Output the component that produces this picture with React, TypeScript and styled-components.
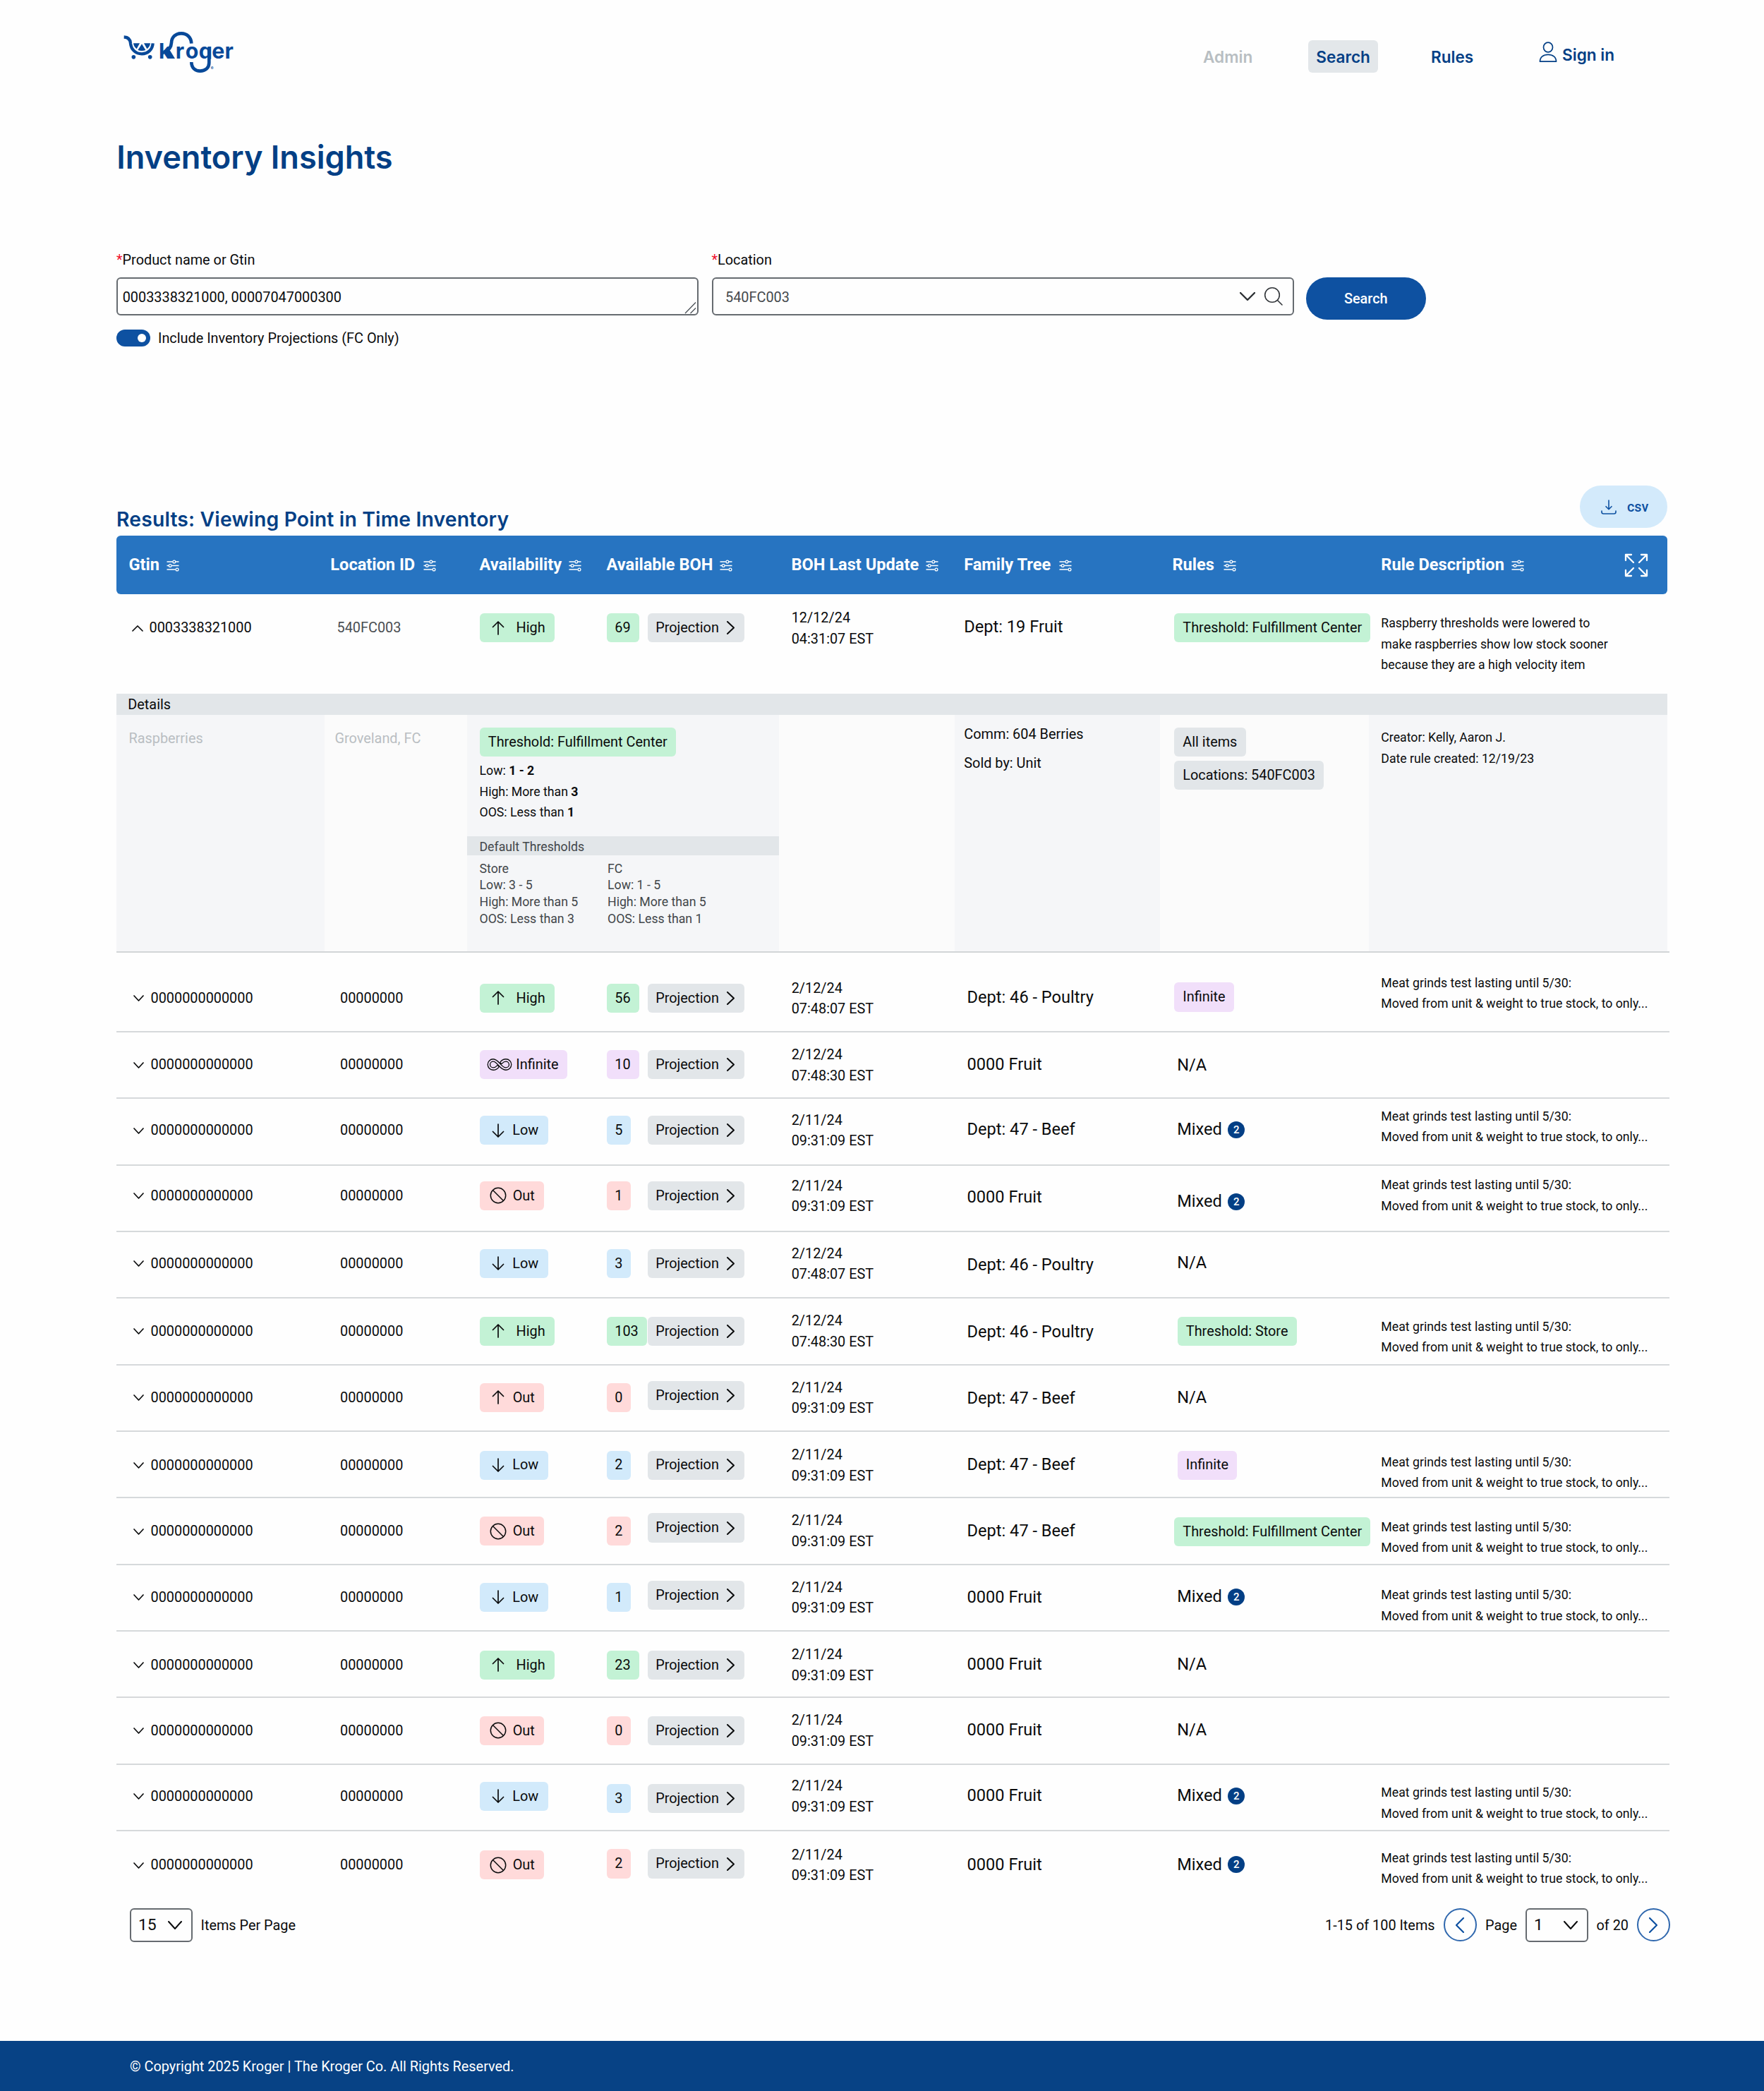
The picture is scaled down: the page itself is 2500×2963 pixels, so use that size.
import React from "react";
import styled, { createGlobalStyle, css } from "styled-components";

const ROBOTO = `Roboto, "Liberation Sans", sans-serif`;
const DISPLAY = `Inter, "Noto Sans", sans-serif`;

const NAVY = "#033f85";
const BLUE = "#0e51a1";

const Global = createGlobalStyle`
  * { box-sizing: border-box; }
  body { margin: 0; background: #fefefe; }
  button, input, textarea { font: inherit; }
`;

const Page = styled.div`
  width: 2500px;
  height: 2963px;
  display: flex;
  flex-direction: column;
  background: #fefefe;
  color: #0a0b0c;
  font-family: ${ROBOTO};
  font-size: 19.88px;
  line-height: 29.5px;
  overflow: hidden;
`;

/* ---------- header ---------- */

const Header = styled.header`
  height: 140px;
  padding: 41.7px 0 0 173.3px;
  display: flex;
  align-items: flex-start;
  flex-shrink: 0;
`;

const Nav = styled.nav`
  display: flex;
  margin: 15.3px 0 0 1351px;
  font-family: ${DISPLAY};
  font-weight: 600;
  font-size: 22.6px;
  color: ${NAVY};
`;

const NavItem = styled.a<{ $w: number; $gap: number; $tone?: "muted" | "active" }>`
  width: ${(p) => p.$w}px;
  height: 46px;
  margin-left: ${(p) => p.$gap}px;
  display: flex;
  align-items: center;
  justify-content: center;
  border-radius: 6px;
  white-space: nowrap;
  padding-top: 2px;
  color: ${(p) => (p.$tone === "muted" ? "#b8bec2" : NAVY)};
  background: ${(p) => (p.$tone === "active" ? "#e3e7ea" : "transparent")};
`;

const SignIn = styled.a`
  display: flex;
  align-items: flex-start;
  gap: 7px;
  margin-left: 73.5px;
  white-space: nowrap;
  svg { margin-top: 2px; }
  span { line-height: 42px; }
`;

const Title = styled.h1`
  margin: 53px 0 0 165.2px;
  height: 58px;
  flex-shrink: 0;
  font-family: ${DISPLAY};
  font-weight: 600;
  font-size: 45.1px;
  line-height: 60px;
  color: ${NAVY};
`;

/* ---------- search form ---------- */

const Form = styled.form`
  display: flex;
  height: 437px;
  flex-shrink: 0;
  padding: 104.7px 0 0 165px;
`;

const Field = styled.div<{ $gap: number }>`
  width: 825px;
  margin-right: ${(p) => p.$gap}px;
  display: flex;
  flex-direction: column;
`;

const Label = styled.label`
  line-height: 25px;
  height: 37.6px;
  b { color: #f0112e; font-weight: 400; }
`;

const InputBox = styled.div<{ $pad: number; $soft?: boolean }>`
  height: 53.8px;
  border: 2px solid #666b70;
  border-radius: 6px;
  padding: 0 13px 0 ${(p) => p.$pad}px;
  display: flex;
  align-items: center;
  color: ${(p) => (p.$soft ? "#45494d" : "#0a0b0c")};
`;

const InputText = styled.span`
  flex: 1;
  padding-top: 3px;
`;

const FieldIcons = styled.span`
  display: flex;
  align-items: center;
  gap: 11.5px;
`;

const Grip = styled.svg`
  align-self: flex-end;
  margin: 0 -13px 0 0;
`;

const ToggleRow = styled.div`
  display: flex;
  align-items: center;
  gap: 11.5px;
  height: 24px;
  margin-top: 20.3px;
`;

const Toggle = styled.span`
  width: 47.5px;
  height: 24px;
  border-radius: 12px;
  background: ${BLUE};
  display: flex;
  align-items: center;
  justify-content: flex-end;
  padding-right: 5.5px;
  &::after {
    content: "";
    width: 12px;
    height: 12px;
    border-radius: 50%;
    background: #fff;
  }
`;

const SearchButton = styled.button`
  width: 169.5px;
  height: 59.4px;
  margin-top: 37.6px;
  padding: 2px 0 0 0;
  border: 0;
  border-radius: 30px;
  background: ${BLUE};
  color: #fff;
  font-weight: 500;
`;

/* ---------- results ---------- */

const ResultsBar = styled.div`
  height: 71px;
  flex-shrink: 0;
  margin: 0 137px 0 165px;
  display: flex;
  justify-content: space-between;
`;

const ResultsTitle = styled.h2`
  margin: 31px 0 0 0;
  font-family: ${DISPLAY};
  font-weight: 600;
  font-size: 28.3px;
  letter-spacing: 0.18px;
  line-height: 34px;
  color: ${NAVY};
`;

const CsvButton = styled.button`
  width: 124px;
  height: 59.5px;
  border: 0;
  border-radius: 30px;
  background: #d3eafb;
  color: ${BLUE};
  font-weight: 500;
  padding: 1px 0 0 30px;
  display: flex;
  align-items: center;
  gap: 15px;
`;

const columns = css`
  display: grid;
  grid-template-columns: 295px 202px 197.5px 244.5px 249px 291px 296px 423px;
`;

const HeadRow = styled.div`
  ${columns}
  height: 83px;
  flex-shrink: 0;
  width: 2198px;
  margin-left: 165px;
  border-radius: 6px;
  background: #2774c1;
  color: #fff;
  font-weight: 700;
  font-size: 23.6px;
`;

const HeadCell = styled.div<{ $pad: number; $gap?: number }>`
  display: flex;
  align-items: center;
  gap: ${(p) => p.$gap ?? 10}px;
  padding-left: ${(p) => p.$pad}px;
  white-space: nowrap;
  svg { flex-shrink: 0; margin-top: 1px; }
  svg.expand { margin: 0 27.5px 0 auto; }
`;

const FirstRow = styled.div`
  ${columns}
  height: 141px;
  flex-shrink: 0;
  margin-left: 165px;
`;

const Row = styled.div<{ $last?: boolean }>`
  ${columns}
  height: 94.33px;
  flex-shrink: 0;
  width: 2201px;
  margin-left: 165px;
  border-bottom: ${(p) => (p.$last ? "0" : "2px solid #d6d9db")};
`;

const Cell = styled.div<{ $mid: number; $pad: number }>`
  height: 42px;
  margin-top: ${(p) => p.$mid - 20.9}px;
  padding-left: ${(p) => p.$pad}px;
  display: flex;
  align-items: center;
  white-space: nowrap;
`;

const Expander = styled.span`
  width: 25px;
  display: flex;
`;

const LocationText = styled.span<{ $soft?: boolean }>`
  color: ${(p) => (p.$soft ? "#4a4e52" : "inherit")};
`;

const Large = styled.span`
  font-size: 23.6px;
`;

const Lines = styled.div<{ $small?: boolean; $pitch?: number; $color?: string; $top?: number }>`
  display: flex;
  flex-direction: column;
  margin-top: ${(p) => p.$top ?? 0}px;
  font-size: ${(p) => (p.$small ? 17.72 : 19.88)}px;
  line-height: ${(p) => p.$pitch ?? 29.5}px;
  color: ${(p) => p.$color ?? "inherit"};
  white-space: nowrap;
`;

type Tone = "green" | "purple" | "blue" | "red" | "grey";
const tones: Record<Tone, string> = {
  green: "#c3f2d5",
  purple: "#f1dffa",
  blue: "#d2eafb",
  red: "#ffdada",
  grey: "#e2e6e9",
};

const Tag = styled.span<{ $tone: Tone; $w?: number; $pad?: number }>`
  height: 41.3px;
  width: ${(p) => (p.$w ? `${p.$w}px` : "auto")};
  padding: 0 ${(p) => (p.$w ? 0 : 12.3)}px 0 ${(p) => p.$pad ?? 12.3}px;
  flex-shrink: 0;
  display: inline-flex;
  align-items: center;
  border-radius: 6px;
  background: ${(p) => tones[p.$tone]};
  white-space: nowrap;
`;

const TagIcon = styled.span<{ $w: number }>`
  width: ${(p) => p.$w}px;
  display: flex;
  flex-shrink: 0;
`;

const BohCell = styled.div`
  display: flex;
  align-items: flex-start;
`;

const CountSlot = styled.div<{ $mid: number }>`
  width: 58.9px;
  margin-top: ${(p) => p.$mid - 20.5}px;
  display: flex;
  ${Tag} { padding: 0 12px 0 11.8px; }
`;

const ProjectionSlot = styled.div<{ $mid: number }>`
  margin-top: ${(p) => p.$mid - 20.5}px;
  display: flex;
`;

const Bubble = styled.span`
  width: 24px;
  height: 24px;
  margin-left: 8.5px;
  border-radius: 50%;
  background: ${NAVY};
  color: #fff;
  font-size: 15px;
  font-weight: 500;
  line-height: 24px;
  text-align: center;
`;

/* ---------- expanded details ---------- */

const DetailsBar = styled.div`
  height: 29.7px;
  flex-shrink: 0;
  width: 2198px;
  margin-left: 165px;
  padding: 1px 0 0 16.3px;
  background: #e2e6e9;
  line-height: 30px;
`;

const Details = styled.div`
  display: grid;
  grid-template-columns: 295px 202px 442px 249px 291px 296px 423px;
  height: 337.3px;
  width: 2201px;
  flex-shrink: 0;
  margin: 0 0 18.7px 165px;
  border-bottom: 2px solid #d2d5d7;
`;

const DetailCol = styled.div<{ $alt?: boolean; $pad: number; $top: number }>`
  background: ${(p) => (p.$alt ? "#fbfbfb" : "#f5f6f8")};
  padding: ${(p) => p.$top}px 0 0 ${(p) => p.$pad}px;
  display: flex;
  flex-direction: column;
  align-items: flex-start;
`;

const Muted = styled.span`
  color: #b9bec2;
`;

const DefaultBar = styled.div`
  width: 442px;
  height: 27px;
  margin: 18.2px 0 8px -17.5px;
  padding: 1px 0 0 17.5px;
  background: #e2e6e9;
  color: #42464a;
  font-size: 17.72px;
  line-height: 28px;
`;

const DefaultGrid = styled.div`
  display: grid;
  grid-template-columns: 181.5px auto;
`;

const TagStack = styled.div`
  display: flex;
  flex-direction: column;
  align-items: flex-start;
  gap: 5.8px;
`;

/* ---------- pagination and footer ---------- */

const Pagination = styled.div`
  height: 48px;
  flex-shrink: 0;
  margin: 14.4px 133px 0 184px;
  display: flex;
  align-items: center;
  white-space: nowrap;
`;

const Select = styled.div`
  width: 88.5px;
  height: 48px;
  border: 2px solid #666b70;
  border-radius: 6px;
  padding: 0 12.5px 0 10px;
  display: flex;
  align-items: center;
  justify-content: space-between;
  font-size: 22.9px;
`;

const PageText = styled.span<{ $l: number; $w: number }>`
  padding: 1.2px 0 0 ${(p) => p.$l}px;
  width: ${(p) => p.$w}px;
`;

const Spacer = styled.div`
  flex: 1;
`;

const RoundButton = styled.button`
  width: 47.5px;
  height: 47.5px;
  padding: 0;
  border: 2px solid #3068ae;
  border-radius: 50%;
  background: transparent;
  display: flex;
  align-items: center;
  justify-content: center;
`;

const Footer = styled.footer`
  margin-top: auto;
  height: 71px;
  flex-shrink: 0;
  padding-left: 184px;
  background: #074285;
  color: #fff;
  line-height: 74px;
`;

/* ---------- drawings ---------- */

const Logo = () => (
  <svg width="163.3" height="63.3" viewBox="70 65 490 190" fill="none">
    <clipPath id="wordmark">
      <path d="M200 65h360v125H200z" />
    </clipPath>
    <g stroke="#084999" strokeWidth="13">
      <path d="M78 96.500C96 97 105 108 106 124C109 150 128 168 154 168C180 168 199 150 201 123" />
      <path d="M248 160C268 154 279 142 280 120C281 96 299 81 322 81C346 81 364 98 365 124" strokeWidth="14" />
      <path d="M440 139V206C440 228 424 241 402 241C381 241 365 227 365 203" strokeWidth="14" />
    </g>
    <g fill="#084999">
      <path d="M118 123h27l-13 24q-12-9-14-24zM163 123h27q-2 15-14 24zM154 126l16 26q-16 6-33 0z" />
      <path d="M256 162L273 152L295 188H275z" />
      <circle cx="119" cy="181.500" r="8.500" />
      <circle cx="189" cy="181.500" r="8.500" />
      <text
        clipPath="url(#wordmark)"
        x="226 297 339.500 396 452 507"
        y="188"
        fontFamily="Inter"
        fontWeight="700"
        fontSize="91"
      >
        kroger
      </text>
      <text x="447" y="232" fontFamily="Inter" fontSize="14">©</text>
    </g>
  </svg>
);

const Person = () => (
  <svg width="26" height="30" viewBox="0 0 26 30" fill="none" stroke={NAVY} strokeWidth="1.700">
    <ellipse cx="13" cy="8" rx="6.500" ry="6.800" />
    <path d="M1.500 28.200C1.500 22 6.500 18.300 13 18.300S24.500 22 24.500 28.200Z" strokeLinejoin="round" />
  </svg>
);

const Chevron = ({ dir, w, h, sw = 1.8, color = "#0a0b0c" }: {
  dir: "up" | "down" | "left" | "right"; w: number; h: number; sw?: number; color?: string;
}) => {
  const a = 1, r = w - 1, b = h - 1;
  const d = {
    up: `M${a} ${b}L${w / 2} ${a}L${r} ${b}`,
    down: `M${a} ${a}L${w / 2} ${b}L${r} ${a}`,
    left: `M${r} ${a}L${a} ${h / 2}L${r} ${b}`,
    right: `M${a} ${a}L${r} ${h / 2}L${a} ${b}`,
  }[dir];
  return (
    <svg width={w} height={h} fill="none" stroke={color} strokeWidth={sw} strokeLinecap="round" strokeLinejoin="round">
      <path d={d} />
    </svg>
  );
};

const Magnifier = () => (
  <svg width="28" height="28" viewBox="0 0 28 28" fill="none" stroke="#33373b" strokeWidth="1.600" strokeLinecap="round">
    <circle cx="12" cy="12" r="10.300" />
    <path d="M19.500 19.500L26 26" />
  </svg>
);

const FilterIcon = () => (
  <svg width="18" height="17" viewBox="0 0 18 17" fill="none" stroke="#fff" strokeWidth="1.300">
    <path d="M0.500 3H8.500M13 3H17.500M0.500 8.500H3M7.500 8.500H17.500M0.500 14H12.500" />
    <circle cx="10.800" cy="3" r="1.900" />
    <circle cx="5.200" cy="8.500" r="1.900" />
    <circle cx="15" cy="14" r="1.900" />
  </svg>
);

const ExpandIcon = () => (
  <svg className="expand" width="34" height="34" viewBox="0 0 34 34" fill="none" stroke="#fff" strokeWidth="2.300" strokeLinecap="round" strokeLinejoin="round">
    <path d="M2 10V2H10M2 2L13 13M24 2H32V10M32 2L21 13M2 24V32H10M2 32L13 21M32 24V32H24M32 32L21 21" />
  </svg>
);

const DownloadIcon = () => (
  <svg width="22" height="21" viewBox="0 0 22 21" fill="none" stroke={BLUE} strokeWidth="1.600" strokeLinecap="round" strokeLinejoin="round">
    <path d="M11 1V13.500M7 9.700L11 13.700L15 9.700M1 16V17.500Q1 20 3.500 20H18.500Q21 20 21 17.500V16" />
  </svg>
);

const Arrow = ({ down }: { down?: boolean }) => (
  <svg width="18" height="20" viewBox="0 0 18 20" fill="none" stroke="#0a0b0c" strokeWidth="1.700" strokeLinecap="round" strokeLinejoin="round">
    <path d={down ? "M9 1V19M1.500 11.500L9 19L16.500 11.500" : "M9 19V1M1.500 8.500L9 1L16.500 8.500"} />
  </svg>
);

const Ban = () => (
  <svg width="24" height="24" viewBox="0 0 24 24" fill="none" stroke="#0a0b0c" strokeWidth="1.500">
    <circle cx="12" cy="12" r="10.700" />
    <path d="M4.500 4.500L19.500 19.500" />
  </svg>
);

const Infinity = () => (
  <svg width="36" height="17" viewBox="0 0 36 17" fill="none">
    <path d="M15.300 11.500C13.500 13.700 11.500 14.600 9 14.600A6.100 6.100 0 0 1 9 2.400C16 2.400 19 14.600 27 14.600A6.100 6.100 0 0 0 27 2.400C24.500 2.400 22.500 3.300 20.700 5.500" stroke="#0a0b0c" strokeWidth="4.600" strokeLinecap="round" />
    <path d="M15.300 11.500C13.500 13.700 11.500 14.600 9 14.600A6.100 6.100 0 0 1 9 2.400C16 2.400 19 14.600 27 14.600A6.100 6.100 0 0 0 27 2.400C24.500 2.400 22.500 3.300 20.700 5.500" stroke="#f1dffa" strokeWidth="2" strokeLinecap="round" />
  </svg>
);

/* ---------- data ---------- */

type Status = "High" | "HighOut" | "Infinite" | "Low" | "Out";
type Rule = "na" | "mixed" | "infinite" | "store" | "fc";

interface Item {
  status: Status;
  count: string;
  date: [string, string];
  family: string;
  rule: Rule;
  desc?: boolean;
  /* vertical centres inside the row: status, count, projection, date, family, rule, description */
  mids: [number, number, number, number, number, number, number];
  rulePad?: number;
}

const items: Item[] = [
  { status: "High", count: "56", date: ["2/12/24", "07:48:07 EST"], family: "Dept: 46 - Poultry", rule: "infinite", desc: true, mids: [45.5, 45.5, 45.5, 46.3, 45.3, 44.3, 39.7], rulePad: 20 },
  { status: "Infinite", count: "10", date: ["2/12/24", "07:48:30 EST"], family: "0000 Fruit", rule: "na", mids: [45.7, 45.7, 45.7, 46.5, 45.5, 46.5, 45] },
  { status: "Low", count: "5", date: ["2/11/24", "09:31:09 EST"], family: "Dept: 47 - Beef", rule: "mixed", desc: true, mids: [44.3, 44.3, 44.3, 44.9, 43.6, 43.8, 39.9] },
  { status: "Out", count: "1", date: ["2/11/24", "09:31:09 EST"], family: "0000 Fruit", rule: "mixed", desc: true, mids: [42.7, 42.7, 42.7, 43.5, 45.1, 50.8, 42.9] },
  { status: "Low", count: "3", date: ["2/12/24", "07:48:07 EST"], family: "Dept: 46 - Poultry", rule: "na", mids: [44.3, 44.3, 44.3, 45, 46.5, 43.5, 45] },
  { status: "High", count: "103", date: ["2/12/24", "07:48:30 EST"], family: "Dept: 46 - Poultry", rule: "store", desc: true, mids: [45.9, 45.9, 45.9, 46.3, 47.1, 45.9, 55] },
  { status: "HighOut", count: "0", date: ["2/11/24", "09:31:09 EST"], family: "Dept: 47 - Beef", rule: "na", mids: [45.7, 45.7, 42.7, 46.5, 46.7, 46, 45] },
  { status: "Low", count: "2", date: ["2/11/24", "09:31:09 EST"], family: "Dept: 47 - Beef", rule: "infinite", desc: true, mids: [47.1, 47.1, 47.1, 47.8, 47, 47.1, 58] },
  { status: "Out", count: "2", date: ["2/11/24", "09:31:09 EST"], family: "Dept: 47 - Beef", rule: "fc", desc: true, mids: [46.3, 46.3, 41.6, 46.6, 46.6, 47.1, 56], rulePad: 20 },
  { status: "Low", count: "1", date: ["2/11/24", "09:31:09 EST"], family: "0000 Fruit", rule: "mixed", desc: true, mids: [45.7, 45.7, 42.7, 46.5, 46.5, 45.5, 58] },
  { status: "High", count: "23", date: ["2/11/24", "09:31:09 EST"], family: "0000 Fruit", rule: "na", mids: [47.3, 47.3, 47.3, 47.7, 47, 47, 45] },
  { status: "Out", count: "0", date: ["2/11/24", "09:31:09 EST"], family: "0000 Fruit", rule: "na", mids: [46, 46, 46, 46.4, 45.8, 45.8, 45] },
  { status: "Low", count: "3", date: ["2/11/24", "09:31:09 EST"], family: "0000 Fruit", rule: "mixed", desc: true, mids: [44.7, 47.9, 47.9, 45.2, 44.4, 44.4, 55] },
  { status: "Out", count: "2", date: ["2/11/24", "09:31:09 EST"], family: "0000 Fruit", rule: "mixed", desc: true, mids: [47.6, 46, 46, 48.3, 47.3, 47.3, 53.3] },
];

const toneOf: Record<Status, Tone> = { High: "green", HighOut: "red", Infinite: "purple", Low: "blue", Out: "red" };

const StatusTag = ({ status }: { status: Status }) => {
  if (status === "High")
    return <Tag $tone="green" $w={106.5} $pad={17.5}><TagIcon $w={34.6}><Arrow /></TagIcon>High</Tag>;
  if (status === "Infinite")
    return <Tag $tone="purple" $w={124} $pad={10}><TagIcon $w={41.8}><Infinity /></TagIcon>Infinite</Tag>;
  if (status === "Low")
    return <Tag $tone="blue" $w={97.5} $pad={17.5}><TagIcon $w={29.2}><Arrow down /></TagIcon>Low</Tag>;
  if (status === "HighOut")
    return <Tag $tone="red" $w={91.5} $pad={17.5}><TagIcon $w={29.7}><Arrow /></TagIcon>Out</Tag>;
  return <Tag $tone="red" $w={91.5} $pad={14.5}><TagIcon $w={32.7}><Ban /></TagIcon>Out</Tag>;
};

const ProjectionTag = () => (
  <Tag $tone="grey" $w={136.5} $pad={10.8}>
    <TagIcon $w={100.7}>Projection</TagIcon>
    <Chevron dir="right" w={11} h={19} sw={2} />
  </Tag>
);

const RuleContent = ({ rule }: { rule: Rule }) => {
  switch (rule) {
    case "na":
      return <Large>N/A</Large>;
    case "mixed":
      return <><Large>Mixed</Large><Bubble>2</Bubble></>;
    case "infinite":
      return <Tag $tone="purple">Infinite</Tag>;
    case "store":
      return <Tag $tone="green">Threshold: Store</Tag>;
    default:
      return <Tag $tone="green">Threshold: Fulfillment Center</Tag>;
  }
};

const ItemRow = ({ item, last }: { item: Item; last: boolean }) => {
  const [st, ct, pr, dt, fm, rl, ds] = item.mids;
  return (
    <Row $last={last}>
      <Cell $mid={st + 0.4} $pad={23.5}>
        <Expander><Chevron dir="down" w={15} h={9} sw={1.7} /></Expander>0000000000000
      </Cell>
      <Cell $mid={st + 0.4} $pad={22}>00000000</Cell>
      <Cell $mid={st} $pad={17.5}><StatusTag status={item.status} /></Cell>
      <BohCell>
        <CountSlot $mid={ct}><Tag $tone={toneOf[item.status]}>{item.count}</Tag></CountSlot>
        <ProjectionSlot $mid={pr}><ProjectionTag /></ProjectionSlot>
      </BohCell>
      <Cell $mid={dt} $pad={17.7}><Lines>{item.date.map((l) => <span key={l}>{l}</span>)}</Lines></Cell>
      <Cell $mid={fm} $pad={17.6}><Large>{item.family}</Large></Cell>
      <Cell $mid={rl} $pad={item.rulePad ?? (item.rule === "na" || item.rule === "mixed" ? 24.2 : 24.5)}><RuleContent rule={item.rule} /></Cell>
      <Cell $mid={ds} $pad={17.3}>
        {item.desc && (
          <Lines $small>
            <span>Meat grinds test lasting until 5/30:</span>
            <span>Moved from unit &amp; weight to true stock, to only...</span>
          </Lines>
        )}
      </Cell>
    </Row>
  );
};

const heads: { text: string; pad: number; gap?: number }[] = [
  { text: "Gtin", pad: 17.5 },
  { text: "Location ID", pad: 8.3, gap: 12 },
  { text: "Availability", pad: 17.5 },
  { text: "Available BOH", pad: 0 },
  { text: "BOH Last Update", pad: 17.5 },
  { text: "Family Tree", pad: 13.2, gap: 12 },
  { text: "Rules", pad: 17.5, gap: 13 },
  { text: "Rule Description", pad: 17.3 },
];

export default function App() {
  return (
    <>
      <Global />
      <Page>
        <Header>
          <Logo />
          <Nav>
            <NavItem $w={99} $gap={3} $tone="muted">Admin</NavItem>
            <NavItem $w={99} $gap={64.5} $tone="active">Search</NavItem>
            <NavItem $w={99} $gap={55.5}>Rules</NavItem>
            <SignIn><Person /><span>Sign in</span></SignIn>
          </Nav>
        </Header>

        <Title>Inventory Insights</Title>

        <Form>
          <Field $gap={18.5}>
            <Label><b>*</b>Product name or Gtin</Label>
            <InputBox $pad={6.7}>
              <InputText>0003338321000, 00007047000300</InputText>
              <Grip width="18" height="18" viewBox="0 0 18 18" stroke="#4b5157" strokeWidth="1.300">
                <path d="M1 17L16 1.500M8.500 17L16 9.500" />
              </Grip>
            </InputBox>
            <ToggleRow>
              <Toggle />
              Include Inventory Projections (FC Only)
            </ToggleRow>
          </Field>
          <Field $gap={17.5}>
            <Label><b>*</b>Location</Label>
            <InputBox $pad={17.5} $soft>
              <InputText>540FC003</InputText>
              <FieldIcons>
                <Chevron dir="down" w={22} h={12} sw={2.4} color="#2c3034" />
                <Magnifier />
              </FieldIcons>
            </InputBox>
          </Field>
          <SearchButton type="button">Search</SearchButton>
        </Form>

        <ResultsBar>
          <ResultsTitle>Results: Viewing Point in Time Inventory</ResultsTitle>
          <CsvButton><DownloadIcon />csv</CsvButton>
        </ResultsBar>

        <HeadRow>
          {heads.map((h, i) => (
            <HeadCell key={h.text} $pad={h.pad} $gap={h.gap}>
              {h.text}<FilterIcon />
              {i === heads.length - 1 && <ExpandIcon />}
            </HeadCell>
          ))}
        </HeadRow>

        <FirstRow>
          <Cell $mid={48} $pad={21.5}>
            <Expander><Chevron dir="up" w={16} h={9} sw={1.7} /></Expander>
            <LocationText>0003338321000</LocationText>
          </Cell>
          <Cell $mid={48} $pad={17.5}><LocationText $soft>540FC003</LocationText></Cell>
          <Cell $mid={47.5} $pad={17.5}><StatusTag status="High" /></Cell>
          <BohCell>
            <CountSlot $mid={47.5}><Tag $tone="green">69</Tag></CountSlot>
            <ProjectionSlot $mid={47.5}><ProjectionTag /></ProjectionSlot>
          </BohCell>
          <Cell $mid={48.5} $pad={17.7}><Lines><span>12/12/24</span><span>04:31:07 EST</span></Lines></Cell>
          <Cell $mid={47} $pad={13.3}><Large>Dept: 19 Fruit</Large></Cell>
          <Cell $mid={47.5} $pad={20}><RuleContent rule="fc" /></Cell>
          <Cell $mid={71.3} $pad={17.3}>
            <Lines $small>
              <span>Raspberry thresholds were lowered to</span>
              <span>make raspberries show low stock sooner</span>
              <span>because they are a high velocity item</span>
            </Lines>
          </Cell>
        </FirstRow>

        <DetailsBar>Details</DetailsBar>
        <Details>
          <DetailCol $pad={17.5} $top={19.3}><Muted>Raspberries</Muted></DetailCol>
          <DetailCol $alt $pad={14.5} $top={19.3}><Muted>Groveland, FC</Muted></DetailCol>
          <DetailCol $pad={17.5} $top={18}>
            <Tag $tone="green">Threshold: Fulfillment Center</Tag>
            <Lines $small $top={6.2}>
              <span>Low: <b>1 - 2</b></span>
              <span>High: More than <b>3</b></span>
              <span>OOS: Less than <b>1</b></span>
            </Lines>
            <DefaultBar>Default Thresholds</DefaultBar>
            <DefaultGrid>
              <Lines $small $pitch={23.6} $color="#42464a">
                <span>Store</span><span>Low: 3 - 5</span><span>High: More than 5</span><span>OOS: Less than 3</span>
              </Lines>
              <Lines $small $pitch={23.6} $color="#42464a">
                <span>FC</span><span>Low: 1 - 5</span><span>High: More than 5</span><span>OOS: Less than 1</span>
              </Lines>
            </DefaultGrid>
          </DetailCol>
          <DetailCol $alt $pad={0} $top={0} />
          <DetailCol $pad={13.3} $top={7}>
            <Lines $pitch={41.2}><span>Comm: 604 Berries</span><span>Sold by: Unit</span></Lines>
          </DetailCol>
          <DetailCol $alt $pad={20} $top={18}>
            <TagStack><Tag $tone="grey">All items</Tag><Tag $tone="grey">Locations: 540FC003</Tag></TagStack>
          </DetailCol>
          <DetailCol $pad={17.3} $top={18.5}>
            <Lines $small><span>Creator: Kelly, Aaron J.</span><span>Date rule created: 12/19/23</span></Lines>
          </DetailCol>
        </Details>

        {items.map((item, i) => (
          <ItemRow key={i} item={item} last={i === items.length - 1} />
        ))}

        <Pagination>
          <Select>15<Chevron dir="down" w={20} h={12} sw={2} /></Select>
          <PageText $l={12} $w={180}>Items Per Page</PageText>
          <Spacer />
          <PageText $l={0} $w={167.5}>1-15 of 100 Items</PageText>
          <RoundButton><Chevron dir="left" w={12} h={22} sw={2.2} color={BLUE} /></RoundButton>
          <PageText $l={12} $w={69}>Page</PageText>
          <Select>1<Chevron dir="down" w={20} h={12} sw={2} /></Select>
          <PageText $l={12} $w={69}>of 20</PageText>
          <RoundButton><Chevron dir="right" w={12} h={22} sw={2.2} color={BLUE} /></RoundButton>
        </Pagination>

        <Footer>© Copyright 2025 Kroger | The Kroger Co. All Rights Reserved.</Footer>
      </Page>
    </>
  );
}
